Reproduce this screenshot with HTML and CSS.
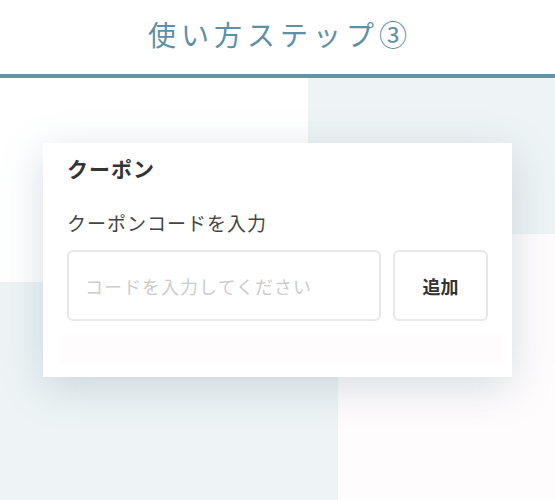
FILE: index.html
```html
<!DOCTYPE html>
<html lang="ja">
<head>
<meta charset="utf-8">
<title>使い方ステップ③</title>
<link rel="stylesheet" href="styles.css">
</head>
<body>
<header class="header">
  <h1 class="title">使い方ステップ③</h1>
</header>
<main class="stage">
  <section class="card">
    <h2 class="card-title">クーポン</h2>
    <label class="label" for="code">クーポンコードを入力</label>
    <div class="row">
      <input class="input" id="code" type="text" placeholder="コードを入力してください">
      <button class="button" type="button">追加</button>
    </div>
    <div class="band"></div>
  </section>
</main>
</body>
</html>
```

FILE: styles.css
```css
* { box-sizing: border-box; }
html, body {
  margin: 0;
  padding: 0;
  background: #ffffff;
  font-family: "Noto Sans CJK JP", "Noto Sans", sans-serif;
}
.header {
  height: 78px;
  padding-top: 14px;
  padding-left: 5px;
  border-bottom: 4px solid #6593a6;
  text-align: center;
}
.title {
  margin: 0;
  font-size: 28px;
  line-height: 40px;
  font-weight: 400;
  letter-spacing: 5px;
  color: #5f8fa4;
}
.stage {
  height: 422px;
  padding: 65px 0 0 43px;
  background-color: #ffffff;
  background-image:
    linear-gradient(#eef4f5, #eef4f5),
    linear-gradient(#eef4f5, #eef4f5),
    linear-gradient(#fffcfd, #fffcfd);
  background-size: 247px 156px, 338px 218px, 217px 266px;
  background-position: 308px 0, 0 204px, 338px 156px;
  background-repeat: no-repeat;
}
.card {
  width: 469px;
  height: 234px;
  padding: 11px 24px 0 24px;
  background: #ffffff;
  box-shadow: 0 10px 40px rgba(70, 110, 130, 0.22);
}
.card-title {
  margin: 0;
  font-size: 21px;
  line-height: 28px;
  font-weight: 700;
  letter-spacing: 1px;
  color: #333333;
}
.label {
  display: block;
  margin-top: 28px;
  font-size: 19px;
  line-height: 26px;
  color: #444444;
  letter-spacing: 1px;
}
.row {
  display: flex;
  gap: 12px;
  margin-top: 14px;
}
.input {
  width: 314px;
  height: 71px;
  padding: 0 16px;
  border: 2px solid #e8e8e8;
  border-radius: 6px;
  font-family: inherit;
  font-size: 18px;
  letter-spacing: 1px;
  color: #333333;
  outline: none;
}
.input::placeholder { color: #cccccc; }
.button {
  width: 95px;
  height: 71px;
  border: 2px solid #e8e8e8;
  border-radius: 6px;
  background: #ffffff;
  font-family: inherit;
  font-size: 18px;
  font-weight: 700;
  color: #333333;
  padding: 0;
}
.band {
  height: 29px;
  margin: 14px -15px 0 -7px;
  background: #fffcfd;
}
```
